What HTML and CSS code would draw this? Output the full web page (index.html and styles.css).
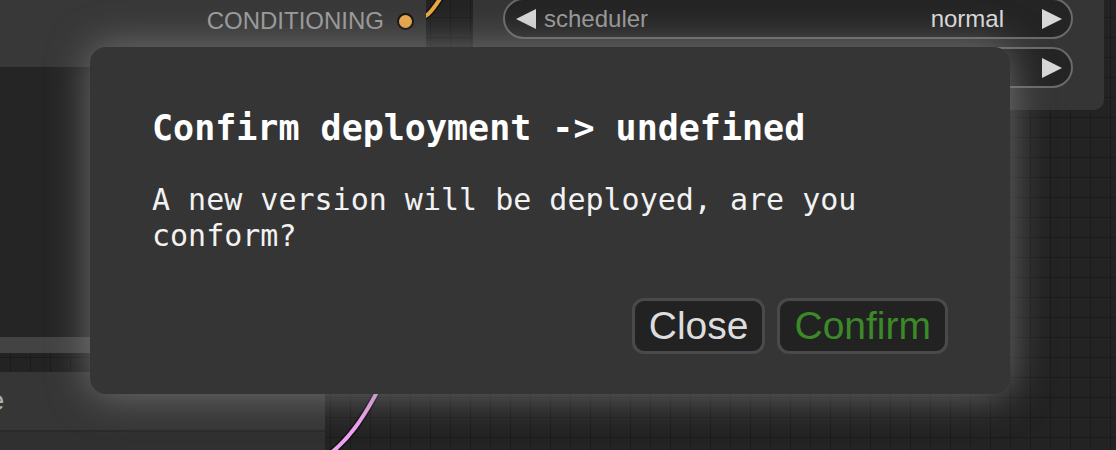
FILE: index.html
```html
<!DOCTYPE html>
<html lang="en">
<head>
<meta charset="utf-8">
<title>Confirm deployment</title>
<link rel="stylesheet" href="styles.css">
</head>
<body>
<div class="canvas">
  <svg class="links" width="1116" height="450" viewBox="0 0 1116 450">
    <path class="link-shadow" d="M405 21 C 428 21, 432 12, 448 -14"/>
    <path class="link-orange" d="M405 21 C 428 21, 432 12, 448 -14"/>
    <path class="link-shadow" d="M318 462 C 345 446, 365 420, 392 362"/>
    <path class="link-pink" d="M318 462 C 345 446, 365 420, 392 362"/>
  </svg>

  <div class="node node-a">
    <div class="out-row">
      <span class="out-label">CONDITIONING</span>
      <span class="slot"></span>
    </div>
    <div class="text-widget"></div>
    <div class="node-a-foot"></div>
  </div>

  <div class="node node-b">
    <div class="combo">
      <svg class="arrow" width="20" height="20" viewBox="0 0 20 20"><path d="M20 0 L0 10 L20 20 Z"/></svg>
      <span class="combo-name">scheduler</span>
      <span class="combo-value">normal</span>
      <svg class="arrow arrow-right" width="20" height="20" viewBox="0 0 20 20"><path d="M0 0 L20 10 L0 20 Z"/></svg>
    </div>
    <div class="combo">
      <svg class="arrow" width="20" height="20" viewBox="0 0 20 20"><path d="M20 0 L0 10 L20 20 Z"/></svg>
      <span class="combo-name">denoise</span>
      <span class="combo-value">1.00</span>
      <svg class="arrow arrow-right" width="20" height="20" viewBox="0 0 20 20"><path d="M0 0 L20 10 L0 20 Z"/></svg>
    </div>
  </div>

  <div class="node node-c">
    <div class="node-c-title"><span class="node-c-label">image</span></div>
    <div class="node-c-body"></div>
  </div>

  <div class="dialog">
    <h2 class="dialog-title">Confirm deployment -&gt; undefined</h2>
    <p class="dialog-text">A new version will be deployed, are you conform?</p>
    <div class="dialog-actions">
      <button class="btn">Close</button>
      <button class="btn btn-confirm">Confirm</button>
    </div>
  </div>
</div>
</body>
</html>
```

FILE: styles.css
```css
html, body {
  margin: 0;
  padding: 0;
}

body {
  width: 1116px;
  height: 450px;
  overflow: hidden;
  background-color: #232323;
  background-image:
    linear-gradient(to right, #1b1b1b 1px, transparent 1px),
    linear-gradient(to bottom, #1b1b1b 1px, transparent 1px);
  background-size: 20px 20px;
  background-position: 10px 17px;
  font-family: "Liberation Sans", Arial, sans-serif;
}

.canvas {
  position: relative;
  width: 1116px;
  height: 450px;
  overflow: hidden;
}

.links {
  position: absolute;
  left: 0;
  top: 0;
}

.link-shadow {
  fill: none;
  stroke: #111;
  stroke-width: 7;
}

.link-orange {
  fill: none;
  stroke: #eaa640;
  stroke-width: 4;
}

.link-pink {
  fill: none;
  stroke: #f0a2f2;
  stroke-width: 4;
}

.node {
  position: absolute;
  box-sizing: border-box;
  background: #353535;
}

/* top-left node */
.node-a {
  left: -20px;
  top: -20px;
  width: 446px;
  height: 373px;
  padding: 20px 12px 0 20px;
  display: flex;
  flex-direction: column;
  border-radius: 0 0 10px 10px;
  background: #383838;
}

.out-row {
  height: 42px;
  display: flex;
  align-items: center;
  justify-content: flex-end;
  gap: 13px;
}

.out-label {
  color: #9c9c9c;
  font-size: 24px;
}

.slot {
  width: 13px;
  height: 13px;
  border-radius: 50%;
  background: #eaa84a;
  border: 2px solid #111;
}

.text-widget {
  margin-top: 25px;
  margin-left: -20px;
  margin-right: -12px;
  height: 270px;
  background: #252525;
}

.node-a-foot {
  flex: 1;
  margin-left: -20px;
  margin-right: -12px;
  background: #434343;
}

/* top-right node */
.node-b {
  left: 473px;
  top: -20px;
  width: 631px;
  height: 130px;
  padding: 18px 0 0 30px;
  border-radius: 0 0 10px 10px;
  display: flex;
  flex-direction: column;
  gap: 8px;
}

.combo {
  box-sizing: border-box;
  width: 570px;
  height: 41px;
  border: 2px solid #6a6a6a;
  border-radius: 21px;
  background: #242424;
  display: flex;
  align-items: center;
  padding: 0 9px 0 11px;
}

.arrow {
  flex: none;
  fill: #d8d8d8;
}

.combo-name {
  flex: 1;
  margin-left: 8px;
  color: #9a9a9a;
  font-size: 24px;
}

.combo-value {
  color: #dddddd;
  font-size: 24px;
  margin-right: 38px;
}

/* bottom-left node */
.node-c {
  left: -300px;
  top: 372px;
  width: 625px;
  height: 100px;
  background: #303030;
  border-radius: 10px 10px 0 0;
}

.node-c-title {
  height: 60px;
  box-sizing: border-box;
  padding-left: 228px;
  display: flex;
  align-items: center;
  background: #363636;
  border-bottom: 2px solid #2a2a2a;
  border-radius: 10px 10px 0 0;
}

.node-c-label {
  color: #b0b0b0;
  font-size: 28px;
}

/* dialog */
.dialog {
  position: absolute;
  left: 90px;
  top: 47px;
  width: 920px;
  height: 347px;
  box-sizing: border-box;
  padding: 60px 62px 40px 62px;
  background: #353535;
  border-radius: 16px;
  box-shadow: 0 0 40px #888888c0;
  display: flex;
  flex-direction: column;
  color: #ffffff;
}

.dialog-title {
  margin: 0;
  font-family: "DejaVu Sans Mono", monospace;
  font-weight: bold;
  font-size: 35px;
  line-height: 42px;
}

.dialog-text {
  margin: 33px 0 0 0;
  font-family: "DejaVu Sans Mono", monospace;
  font-size: 30px;
  line-height: 36px;
  color: #f2f2f2;
}

.dialog-actions {
  margin-top: auto;
  display: flex;
  justify-content: flex-end;
  gap: 12px;
}

.btn {
  box-sizing: border-box;
  height: 56px;
  padding: 0 14px;
  border: 3px solid #4a4a4a;
  border-radius: 12px;
  background: #222222;
  color: #dddddd;
  font-family: "Liberation Sans", Arial, sans-serif;
  font-size: 39px;
  line-height: 50px;
}

.btn-confirm {
  color: #3b8a28;
}
```
